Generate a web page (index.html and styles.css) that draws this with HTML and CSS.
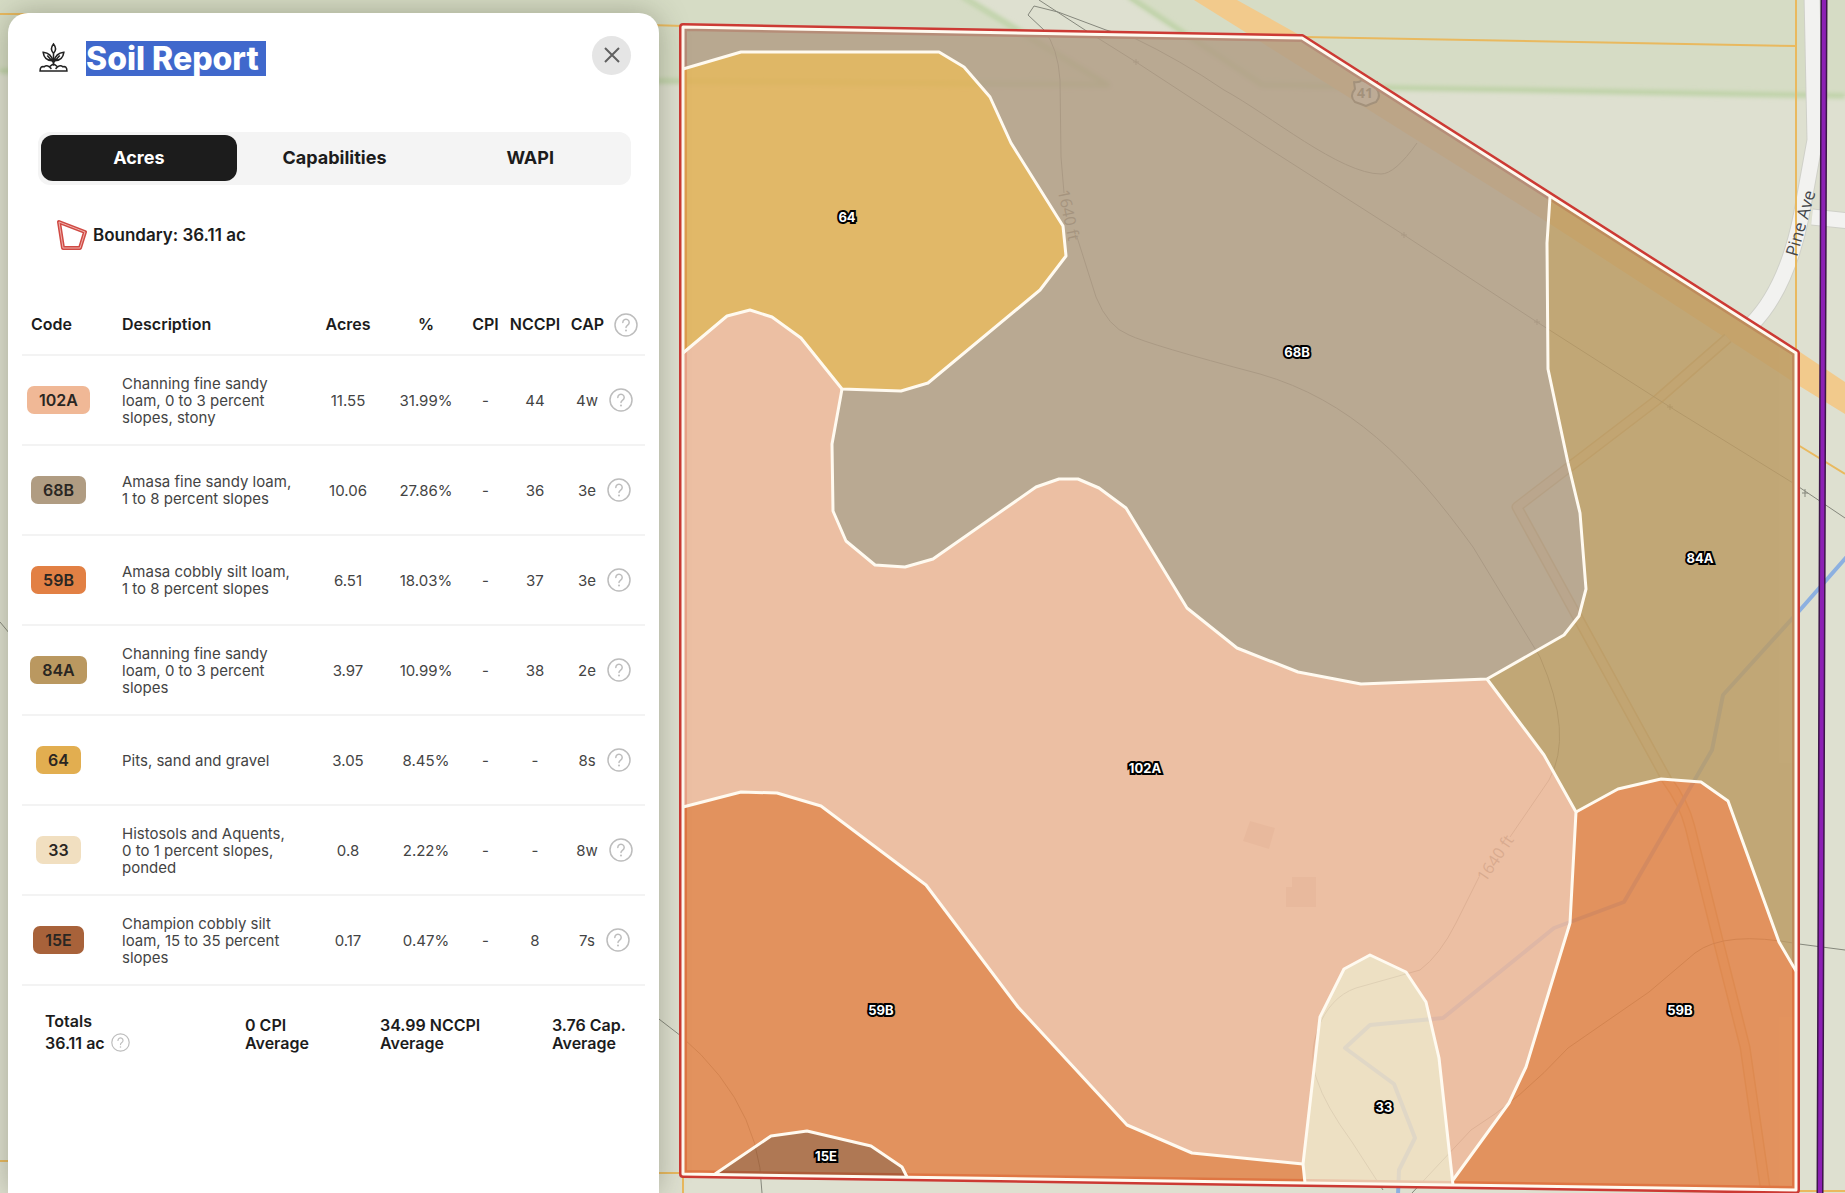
FILE: index.html
```
<!DOCTYPE html>
<html lang="en">
<head>
  <meta charset="UTF-8">
  <meta name="viewport" content="width=device-width, initial-scale=1.0">
  <title>Soil Report</title>
  <link rel="stylesheet" href="styles.css">
</head>
<body>
  <svg width="0" height="0" class="defs" aria-hidden="true">
    <symbol id="help" viewBox="0 0 24 24">
      <circle cx="12" cy="12" r="11" fill="none" stroke="currentColor" stroke-width="1.5"/>
      <path d="M8.8 9.4a3.2 3.2 0 1 1 4.9 2.7c-1 .7-1.7 1.2-1.7 2.5" fill="none" stroke="currentColor" stroke-width="1.5" stroke-linecap="round"/>
      <circle cx="12" cy="17.6" r="1" fill="currentColor"/>
    </symbol>
  </svg>

  <main class="app">
    <svg class="map" viewBox="0 0 1845 1193" preserveAspectRatio="xMinYMin slice" role="img" aria-label="Soil map">
      <defs>
        <filter id="soft"><feGaussianBlur stdDeviation="2"/></filter>
      </defs>

      <!-- base map -->
      <rect width="1845" height="1193" fill="#dee0d0"/>
      <path d="M0 0H965L1110 85L0 72Z" fill="#d6dcc5"/>
      <path d="M1130 0H1845V96L1330 88L1260 84Z" fill="#d6dcc5"/>
      <g class="park-edge" filter="url(#soft)">
        <path d="M0 71L660 81L1108 85L962 -4"/>
        <path d="M1128 -4L1262 85L1400 88L1845 96"/>
      </g>
      <path class="highway" d="M1194 0H1237L1303 37L1800 352L1845 382V414L1801 387L1547 222L1242 30Z"/>
      <path class="street-edge" d="M1812 -5L1815 140L1801 217Q1786 290 1751 325M1812 217L1850 221"/>
      <path class="street" d="M1812 -5L1815 140L1801 217Q1786 290 1751 325M1812 217L1850 221"/>
      <path class="track-edge" d="M1728 338L1657 400L1517 507L1667 780Q1684 803 1690 827L1718 940L1745 1047L1765 1187"/>
      <path class="track" d="M1728 338L1657 400L1517 507L1667 780Q1684 803 1690 827L1718 940L1745 1047L1765 1187"/>
      <path class="building" d="M1250 821L1275 828L1269 849L1243 841ZM1292 877H1316V907H1286V887H1292Z"/>
      <path class="stream" d="M1850 553L1800 610L1723 695L1712 750L1624 902L1554 928L1443 1018L1370 1025L1345 1048L1394 1084L1415 1138L1399 1170L1398 1195"/>
      <g class="contour">
        <path d="M1044 30L1028 15L1034 6L1058 12L1106 30L1134 38Q1180 60 1224 90C1270 115 1340 174 1381 174Q1395 174 1417 143"/>
        <path d="M1044 30Q1058 48 1060 80L1061 157L1064 193M1077 237L1096 297Q1108 327 1129 335Q1150 345 1260 374C1350 400 1410 460 1473 547L1540 657Q1574 735 1549 780L1510 837M1479 877L1456 923Q1440 955 1420 970L1356 988C1320 1000 1305 1050 1317 1080Q1325 1105 1352 1142L1383 1190"/>
        <path d="M1412 1193L1471 1130Q1520 1100 1568 1048L1649 992L1695 953Q1725 930 1799 944L1845 950"/>
        <path d="M1039 0L1085 30L1136 62L1260 143L1404 235L1537 322L1670 407L1793 483L1845 518"/>
        <path d="M1133 62h6M1136 59v6M1401 235h6M1404 232v6M1534 322h6M1537 319v6M1667 407h6M1670 404v6M1802 493h6M1805 489v8"/>
        <path d="M655 1016Q760 1090 762 1193M0 622L10 634"/>
      </g>
      <g class="elevation">
        <text transform="translate(1069 215) rotate(78)">1640 ft</text>
        <text transform="translate(1495 858) rotate(-56)">1640 ft</text>
      </g>
      <path class="shield" d="M1354 82Q1359 83 1362 80Q1365 83 1369 80Q1373 83 1377 82L1376 88Q1382 96 1376 102Q1370 104 1366 106Q1361 104 1355 102Q1349 96 1355 89Z"/>
      <text class="shield-text" x="1365" y="98">41</text>
      <path class="parcel" d="M0 14H30M650 25L683 26M1303 37L1797 46M1796 0V352M1798 445L1845 474M0 1161H20M650 1173H683V1193M1797 1191H1845"/>
      <text class="street-name" transform="translate(1800 223) rotate(-74)">Pine Ave</text>
      <path class="county-edge" d="M1824 0L1822 600L1820 1193"/>
      <path class="county" d="M1824 0L1822 600L1820 1193"/>

      <!-- soil units -->
      <path class="boundary-outer" d="M683 27L1302 38L1796 353V1190L683 1174Z"/>
      <g class="units">
        <path fill="#b29e86" d="M683 27L1302 38L1550 197L1547 243L1548 369L1568 463L1580 513L1586 589L1579 616L1564 635L1487 679L1361 684L1298 672L1237 648L1187 608L1126 508L1099 488L1078 479L1059 479L1036 487L933 559L905 567L875 565L846 541L833 511L832 444L842 389L901 391L928 383L1040 290L1066 256L1063 226L1011 143L990 97L964 67L939 52H741L683 69Z"/>
        <path fill="#e2b054" d="M683 69L741 52H939L964 67L990 97L1011 143L1063 226L1066 256L1040 290L928 383L901 391L842 389L801 338L772 317L750 310L727 316L683 353Z"/>
        <path fill="#f0b99a" d="M683 353L727 316L750 310L772 317L801 338L842 389L832 444L833 511L846 541L875 565L905 567L933 559L1036 487L1059 479L1078 479L1099 488L1126 508L1187 608L1237 648L1298 672L1361 684L1487 679L1544 755L1576 812L1570 923L1526 1067L1509 1103L1453 1180L1439 1058L1426 1002L1406 972L1370 955L1344 969L1320 1017L1303 1164L1192 1153L1127 1125L1018 1007L926 885L821 806L777 793L741 792L683 807Z"/>
        <path fill="#bc9c65" d="M1550 197L1796 353V971L1779 942L1728 801L1701 782L1661 779L1618 789L1576 812L1544 755L1487 679L1564 635L1579 616L1586 589L1580 513L1568 463L1548 369L1547 243Z"/>
        <path fill="#e38347" d="M683 807L741 792L777 793L821 806L926 885L1018 1007L1127 1125L1192 1153L1303 1164L1305 1183L907 1177L902 1167L871 1146L807 1131L771 1136L715 1174H683Z"/>
        <path fill="#e38347" d="M1576 812L1618 789L1661 779L1701 782L1728 801L1779 942L1796 971V1190L1453 1185V1180L1509 1103L1526 1067L1570 923Z"/>
        <path fill="#f1e0c1" d="M1305 1183L1303 1164L1320 1017L1344 969L1370 955L1406 972L1426 1002L1439 1058L1453 1185Z"/>
        <path fill="#a6643b" d="M715 1174L771 1136L807 1131L871 1146L902 1167L907 1177Z"/>
      </g>
      <g class="unit-lines">
        <path d="M683 69L741 52H939L964 67L990 97L1011 143L1063 226L1066 256L1040 290L928 383L901 391L842 389L801 338L772 317L750 310L727 316L683 353"/>
        <path d="M842 389L832 444L833 511L846 541L875 565L905 567L933 559L1036 487L1059 479L1078 479L1099 488L1126 508L1187 608L1237 648L1298 672L1361 684L1487 679L1564 635L1579 616L1586 589L1580 513L1568 463L1548 369L1547 243L1550 197"/>
        <path d="M1487 679L1544 755L1576 812L1570 923L1526 1067L1509 1103L1453 1180"/>
        <path d="M1576 812L1618 789L1661 779L1701 782L1728 801L1779 942L1796 971"/>
        <path d="M683 807L741 792L777 793L821 806L926 885L1018 1007L1127 1125L1192 1153L1303 1164"/>
        <path d="M1305 1183L1303 1164L1320 1017L1344 969L1370 955L1406 972L1426 1002L1439 1058L1453 1185"/>
        <path d="M715 1174L771 1136L807 1131L871 1146L902 1167L907 1177"/>
        <path d="M683 27L1302 38L1796 353V1190L683 1174Z"/>
      </g>
      <g class="unit-labels">
        <text x="847" y="222">64</text>
        <text x="1297" y="357">68B</text>
        <text x="1700" y="563">84A</text>
        <text x="1145" y="773">102A</text>
        <text x="881" y="1015">59B</text>
        <text x="1680" y="1015">59B</text>
        <text x="1384" y="1112">33</text>
        <text x="826" y="1161">15E</text>
      </g>
    </svg>

    <section class="panel">
      <header class="panel-header">
        <svg class="soil-icon" viewBox="0 0 30 30" aria-hidden="true">
          <path d="M15 2Q11 7 15 11Q19 7 15 2ZM14 18Q13 11 5 10Q6 18 14 18ZM16 18Q17 11 25 10Q24 18 16 18ZM15 11V23M9 13L15 20L21 13M2 28Q2 23 6 24Q8 22 11 24L15 21L19 24Q22 22 24 24Q28 23 28 28ZM11 24L13 26M19 24L17 26"/>
        </svg>
        <h1><span class="selected">Soil Report&nbsp;</span></h1>
        <button type="button" class="close" aria-label="Close">
          <svg viewBox="0 0 16 16"><path d="M1 1L15 15M15 1L1 15"/></svg>
        </button>
      </header>

      <nav class="tabs">
        <button type="button" class="tab active">Acres</button>
        <button type="button" class="tab">Capabilities</button>
        <button type="button" class="tab">WAPI</button>
      </nav>

      <div class="boundary">
        <svg viewBox="0 0 30 32" aria-hidden="true">
          <path class="edge" d="M2 3L28 13L23 29H6Z"/>
          <path class="core" d="M2 3L28 13L23 29H6Z"/>
        </svg>
        <span>Boundary: 36.11 ac</span>
      </div>

      <table class="soils">
        <colgroup>
          <col class="c-code"><col class="c-desc"><col class="c-num"><col class="c-num"><col class="c-cpi"><col class="c-nccpi"><col class="c-cap">
        </colgroup>
        <thead>
          <tr>
            <th class="code">Code</th>
            <th class="desc">Description</th>
            <th>Acres</th>
            <th>%</th>
            <th>CPI</th>
            <th>NCCPI</th>
            <th><div class="cap">CAP <svg class="help"><use href="#help"/></svg></div></th>
          </tr>
        </thead>
        <tbody>
          <tr>
            <td><span class="badge s102a">102A</span></td>
            <td class="desc">Channing fine sandy loam, 0 to 3 percent slopes, stony</td>
            <td>11.55</td><td>31.99%</td><td>-</td><td>44</td>
            <td><div class="cap">4w <svg class="help"><use href="#help"/></svg></div></td>
          </tr>
          <tr>
            <td><span class="badge s68b">68B</span></td>
            <td class="desc">Amasa fine sandy loam, 1 to 8 percent slopes</td>
            <td>10.06</td><td>27.86%</td><td>-</td><td>36</td>
            <td><div class="cap">3e <svg class="help"><use href="#help"/></svg></div></td>
          </tr>
          <tr>
            <td><span class="badge s59b">59B</span></td>
            <td class="desc">Amasa cobbly silt loam, 1 to 8 percent slopes</td>
            <td>6.51</td><td>18.03%</td><td>-</td><td>37</td>
            <td><div class="cap">3e <svg class="help"><use href="#help"/></svg></div></td>
          </tr>
          <tr>
            <td><span class="badge s84a">84A</span></td>
            <td class="desc">Channing fine sandy loam, 0 to 3 percent slopes</td>
            <td>3.97</td><td>10.99%</td><td>-</td><td>38</td>
            <td><div class="cap">2e <svg class="help"><use href="#help"/></svg></div></td>
          </tr>
          <tr>
            <td><span class="badge s64">64</span></td>
            <td class="desc">Pits, sand and gravel</td>
            <td>3.05</td><td>8.45%</td><td>-</td><td>-</td>
            <td><div class="cap">8s <svg class="help"><use href="#help"/></svg></div></td>
          </tr>
          <tr>
            <td><span class="badge s33">33</span></td>
            <td class="desc">Histosols and Aquents, 0 to 1 percent slopes, ponded</td>
            <td>0.8</td><td>2.22%</td><td>-</td><td>-</td>
            <td><div class="cap">8w <svg class="help"><use href="#help"/></svg></div></td>
          </tr>
          <tr>
            <td><span class="badge s15e">15E</span></td>
            <td class="desc">Champion cobbly silt loam, 15 to 35 percent slopes</td>
            <td>0.17</td><td>0.47%</td><td>-</td><td>8</td>
            <td><div class="cap">7s <svg class="help"><use href="#help"/></svg></div></td>
          </tr>
        </tbody>
      </table>

      <div class="totals">
        <div class="total-acres">Totals<br>36.11 ac <svg class="help"><use href="#help"/></svg></div>
        <div>0 CPI<br>Average</div>
        <div>34.99 NCCPI<br>Average</div>
        <div>3.76 Cap.<br>Average</div>
      </div>
    </section>
  </main>
</body>
</html>
```

FILE: styles.css
```
* { box-sizing: border-box; }
body {
  margin: 0;
  font-family: Inter, "Liberation Sans", sans-serif;
  font-size: 15px;
  color: #1c1c1c;
}
button { font: inherit; border: 0; cursor: pointer; }
.defs { position: absolute; }

.app {
  position: relative;
  display: flex;
  height: 100vh;
  min-height: 1100px;
  padding: 13px 8px 0;
  overflow: hidden;
  background: #dee0d0;
}

/* map */
.map { position: absolute; inset: 0; width: 100%; height: 100%; }
.map path { stroke-linejoin: round; }
.park-edge { fill: none; stroke: #bdd2a6; stroke-width: 5; }
.highway { fill: #f2ca8c; }
.street-edge { fill: none; stroke: #cfd0c8; stroke-width: 17; }
.street { fill: none; stroke: #f2f2f0; stroke-width: 15; }
.track-edge { fill: none; stroke: #c8ae80; stroke-width: 11; }
.track { fill: none; stroke: #e2d2b4; stroke-width: 8; }
.building { fill: #c4bcb0; }
.stream { fill: none; stroke: #8cb0e0; stroke-width: 4; }
.contour { fill: none; stroke: #85877c; stroke-width: 1; }
.elevation text {
  font: 16px "Open Sans", sans-serif;
  fill: #66645a;
  text-anchor: middle;
  dominant-baseline: central;
}
.shield { fill: #f4f0ea; stroke: #5c554a; stroke-width: 2; }
.shield-text { font: bold 14px "Open Sans", sans-serif; fill: #5c554a; text-anchor: middle; }
.parcel { fill: none; stroke: #e9b95f; stroke-width: 2; }
.street-name {
  font: 17px "Open Sans", sans-serif;
  fill: #44464a;
  text-anchor: middle;
  dominant-baseline: central;
}
.county-edge { fill: none; stroke: #3c1648; stroke-width: 7; }
.county { fill: none; stroke: #8c20b4; stroke-width: 4; }
.boundary-outer { fill: none; stroke: #cc3a34; stroke-width: 8; }
.units { opacity: .83; }
.unit-lines { fill: none; stroke: #fffaf0; stroke-width: 3; }
.unit-labels text {
  font: bold 13px Inter, sans-serif;
  fill: #fff;
  stroke: #000;
  stroke-width: 4px;
  paint-order: stroke;
  text-anchor: middle;
}

/* report panel */
.panel {
  position: relative;
  width: 651px;
  padding: 0 14px;
  background: #fff;
  border-radius: 20px 20px 0 0;
  box-shadow: 0 0 30px rgba(60, 60, 40, .35);
}
.panel-header {
  display: flex;
  align-items: center;
  height: 84px;
  padding: 0 14px 0 16px;
}
.soil-icon {
  width: 31px;
  height: 31px;
  margin-top: 4px;
  fill: none;
  stroke: #222;
  stroke-width: 1.5;
}
h1 {
  flex: 1;
  margin: 6px 0 0 17px;
  font-size: 32px;
  font-weight: 800;
  line-height: 35px;
}
.selected { display: inline-block; color: #fff; background: #4068cc; }
.close {
  display: grid;
  place-items: center;
  width: 39px;
  height: 39px;
  padding: 0;
  border-radius: 50%;
  background: #e5e5e5;
}
.close svg { width: 16px; height: 16px; fill: none; stroke: #606060; stroke-width: 2; }

.tabs {
  display: flex;
  margin: 35px 14px 0 16px;
  padding: 3px;
  height: 53px;
  border-radius: 12px;
  background: #f4f4f4;
}
.tab {
  flex: 1;
  height: 46px;
  padding: 0 0 2px;
  border-radius: 12px;
  font-size: 18px;
  font-weight: 700;
  color: #1c1c1c;
  background: none;
}
.tab.active { color: #fff; background: #1c1c1c; }

.boundary {
  display: flex;
  align-items: center;
  gap: 6px;
  margin: 34px 0 0 35px;
  height: 32px;
  font-size: 17px;
  font-weight: 600;
}
.boundary svg { width: 30px; height: 32px; fill: none; stroke-linejoin: round; }
.boundary .edge { stroke: #d04a44; stroke-width: 4; }
.boundary .core { stroke: #efb0aa; stroke-width: 1; }

.soils {
  width: 100%;
  margin-top: 44px;
  table-layout: fixed;
  border-collapse: collapse;
}
.c-code { width: 73px; }
.c-desc { width: 214px; }
.c-num { width: 78px; }
.c-cpi { width: 41px; }
.c-nccpi { width: 58px; }
.soils th, .soils td {
  padding: 0;
  text-align: center;
  line-height: 17px;
  border-bottom: 2px solid #f3f3f3;
}
.soils th { height: 60px; font-size: 16px; font-weight: 600; }
.soils td { height: 90px; color: #444; }
.soils th.code { padding-left: 9px; text-align: left; }
.soils .desc { padding: 0 14px 0 27px; text-align: left; }
.badge {
  display: inline-block;
  padding: 0 12px;
  border-radius: 7px;
  font-size: 16px;
  font-weight: 600;
  line-height: 28px;
  color: #2a2622;
}
.s102a { background: #f0b896; }
.s68b { background: #b09c82; }
.s59b { background: #e28044; }
.s84a { background: #ba9860; }
.s64 { background: #e2ae50; }
.s33 { background: #f1dfc0; }
.s15e { background: #a8623a; }
.cap { display: flex; align-items: center; justify-content: center; gap: 11px; }
th .cap { gap: 10px; }
.help { width: 24px; height: 24px; color: #bdbdbd; }

.totals {
  display: grid;
  grid-template-columns: 200px 135px 172px 1fr;
  align-items: center;
  padding: 24px 0 0 23px;
  font-size: 16px;
  font-weight: 600;
  line-height: 18px;
}
.total-acres { padding-bottom: 4px; line-height: 22px; }
.total-acres .help { width: 19px; height: 19px; margin-left: 2px; vertical-align: -3px; }
```
